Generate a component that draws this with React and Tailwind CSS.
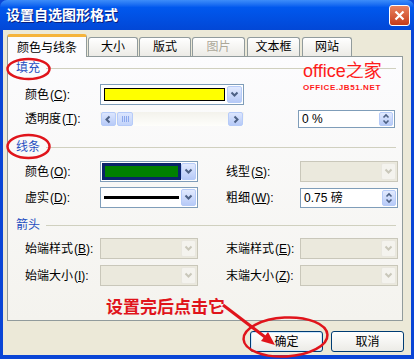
import clsx from 'clsx'

const Chevron = ({ dir = 'down', color = '#4D6185' }) => {
  const d = {
    down: 'M1.5 2.5 L4.5 5.5 L7.5 2.5',
    up: 'M1.5 5.5 L4.5 2.5 L7.5 5.5',
    left: 'M5.5 1.5 L2.5 4.5 L5.5 7.5',
    right: 'M3.5 1.5 L6.5 4.5 L3.5 7.5',
  }[dir]
  return (
    <svg width="9" height="9" viewBox="0 0 9 9">
      <path d={d} fill="none" stroke={color} strokeWidth="2" />
    </svg>
  )
}

const DropBtn = ({ disabled }) => (
  <div
    className={clsx(
      'flex w-[15px] shrink-0 items-center justify-center rounded-[2px] border',
      disabled ? 'border-[#E9E7DF] bg-[#F4F3EE]' : 'border-[#B6CBF8] bg-linear-to-b from-[#E2EAFE] to-[#B7CAF7]'
    )}
  >
    <Chevron color={disabled ? '#C9C7BA' : '#4D6185'} />
  </div>
)

const Combo = ({ className, disabled, children }) => (
  <div
    className={clsx(
      'flex h-[21px] shrink-0 border p-[1px]',
      disabled ? 'border-[#C9C7BA] bg-[#EBE9DD]' : 'border-[#7F9DB9] bg-white',
      className
    )}
  >
    <div className="min-w-0 flex-1">{children}</div>
    <DropBtn disabled={disabled} />
  </div>
)

const Spin = ({ className, value }) => (
  <div className={clsx('flex shrink-0 border border-[#7F9DB9] bg-white p-[1px]', className)}>
    <div className="flex flex-1 items-center pl-[2px] text-[12px] text-black">{value}</div>
    <div className="flex w-[14px] flex-col items-center justify-center rounded-[2px] border border-[#B6CBF8] bg-linear-to-b from-[#E2EAFE] to-[#B7CAF7]">
      <svg width="8" height="12" viewBox="0 0 8 12">
        <path d="M1.5 4.5 L4 2 L6.5 4.5 M1.5 7.5 L4 10 L6.5 7.5" fill="none" stroke="#4D6185" strokeWidth="1.6" />
      </svg>
    </div>
  </div>
)

const Label = ({ text, hotkey, className }) => (
  <span className={clsx('shrink-0 text-[12px] text-black', className)}>
    {text}
    <span className="ml-[1px]">
      (<u>{hotkey}</u>):
    </span>
  </span>
)

const Heading = ({ children, className }) => (
  <div className={clsx('flex h-[16px] items-center', className)}>
    <span className="text-[12px] text-[#1F4FC1]">{children}</span>
    <div className="ml-[6px] mr-[6px] h-px flex-1 bg-[#D0D0BF]" />
  </div>
)

const Tab = ({ active, disabled, className, children }) => (
  <div
    className={clsx(
      'flex items-center justify-center rounded-t-[3px] border-x border-t text-[12px]',
      active
        ? 'relative z-10 -mb-px h-[23px] border-x-[#919B9C] border-t-[3px] border-t-[#F5B43C] bg-[#FCFCFE] pt-[1px] text-black'
        : 'h-[19px] border-[#919B9C] bg-linear-to-b from-white to-[#ECEBE6]',
      disabled ? 'text-[#ACA899]' : 'text-black',
      className
    )}
  >
    {children}
  </div>
)

const XpButton = ({ children, def }) => (
  <div
    className={clsx(
      'flex h-[21px] w-[73px] items-center justify-center rounded-[3px] border border-[#003C74] bg-linear-to-b from-white to-[#ECEBE6] text-[12px] text-black',
      def && 'shadow-[inset_0_0_0_1px_#CEE7FF]'
    )}
  >
    {children}
  </div>
)

export default function App() {
  return (
    <div className="relative flex h-[359px] w-[414px] flex-col overflow-hidden bg-[#0A45D6] font-['Liberation_Sans','Noto_Sans_CJK_SC',sans-serif]">
      {/* title bar */}
      <div className="flex h-[30px] shrink-0 items-center rounded-t-[7px] bg-linear-to-b from-[#3D8DF9] via-[#0058EE] via-25% to-[#0247D6] pl-[6px]">
        <span className="text-[14px] font-bold text-white [text-shadow:1px_1px_0_#0A1F80]">设置自选图形格式</span>
        <div className="ml-auto mr-[4px] flex h-[21px] w-[21px] items-center justify-center rounded-[3px] border border-white bg-linear-to-b from-[#E9815E] to-[#C53A16]">
          <svg width="11" height="11" viewBox="0 0 11 11">
            <path d="M1.5 1.5 L9.5 9.5 M9.5 1.5 L1.5 9.5" stroke="white" strokeWidth="2.2" />
          </svg>
        </div>
      </div>

      {/* body */}
      <div className="mx-[3px] mb-[4px] flex flex-1 flex-col bg-[#ECE9D8] pl-[4px] pt-[4px]">
        <div className="flex h-[22px] items-end">
          <Tab active className="w-[80px]">颜色与线条</Tab>
          <Tab className="ml-px w-[50px]">大小</Tab>
          <Tab className="ml-px w-[52px]">版式</Tab>
          <Tab disabled className="ml-px w-[53px]">图片</Tab>
          <Tab className="ml-[2px] w-[53px]">文本框</Tab>
          <Tab className="ml-[2px] w-[50px]">网站</Tab>
        </div>

        <div className="h-[265px] w-[396px] border border-[#919B9C] bg-linear-to-b from-[#FCFCFE] to-[#F4F3EE] pl-[8px] pt-[3px]">
          <Heading>填充</Heading>

          <div className="mt-[8px] flex h-[21px] items-center pl-[9px]">
            <Label text="颜色" hotkey="C" className="w-[75px]" />
            <Combo className="w-[144px]">
              <div className="m-[2px] h-[13px] border border-black bg-[#FFFF00]" />
            </Combo>
          </div>

          <div className="mt-[5px] flex h-[18px] items-center pl-[9px]">
            <Label text="透明度" hotkey="T" className="w-[75px]" />
            <div className="flex h-[14px] w-[144px] shrink-0 gap-px bg-linear-to-b from-[#F3F2EC] to-[#FEFEFB] px-px">
              <div className="flex w-[15px] items-center justify-center rounded-[2px] border border-[#B6CBF8] bg-linear-to-b from-[#DCE6FE] to-[#B7CAF7]">
                <Chevron dir="left" />
              </div>
              <div className="flex w-[16px] items-center justify-center rounded-[2px] border border-[#B6CBF8] bg-linear-to-b from-[#DCE6FE] to-[#C3D4FA]">
                <svg width="7" height="6" viewBox="0 0 7 6">
                  <path d="M0.5 0 V6 M2.5 0 V6 M4.5 0 V6 M6.5 0 V6" stroke="#8CA8EC" strokeWidth="1" />
                </svg>
              </div>
              <div className="flex-1" />
              <div className="flex w-[15px] items-center justify-center rounded-[2px] border border-[#B6CBF8] bg-linear-to-b from-[#DCE6FE] to-[#B7CAF7]">
                <Chevron dir="right" />
              </div>
            </div>
            <Spin className="ml-[54px] h-[18px] w-[97px]" value="0 %" />
          </div>

          <Heading className="mt-[11px]">线条</Heading>

          <div className="mt-[6px] flex h-[21px] items-center pl-[9px]">
            <Label text="颜色" hotkey="O" className="w-[75px]" />
            <Combo className="w-[98px]">
              <div className="h-full bg-[#0A246A] p-[2px]">
                <div className="h-full border border-[#0A246A] bg-[#008000]" />
              </div>
            </Combo>
            <Label text="线型" hotkey="S" className="ml-[28px] w-[74px]" />
            <Combo disabled className="w-[98px]" />
          </div>

          <div className="mt-[5px] flex h-[21px] items-center pl-[9px]">
            <Label text="虚实" hotkey="D" className="w-[75px]" />
            <Combo className="w-[98px]">
              <div className="flex h-full items-center pl-[2px] pr-[2px]">
                <div className="h-[3px] w-full bg-black" />
              </div>
            </Combo>
            <Label text="粗细" hotkey="W" className="ml-[28px] w-[74px]" />
            <Spin className="h-[20px] w-[98px]" value="0.75 磅" />
          </div>

          <Heading className="mt-[9px]">箭头</Heading>

          <div className="mt-[5px] flex h-[21px] items-center pl-[9px]">
            <Label text="始端样式" hotkey="B" className="w-[75px]" />
            <Combo disabled className="w-[98px]" />
            <Label text="末端样式" hotkey="E" className="ml-[28px] w-[74px]" />
            <Combo disabled className="w-[98px]" />
          </div>

          <div className="mt-[6px] flex h-[21px] items-center pl-[9px]">
            <Label text="始端大小" hotkey="I" className="w-[75px]" />
            <Combo disabled className="w-[98px]" />
            <Label text="末端大小" hotkey="Z" className="ml-[28px] w-[74px]" />
            <Combo disabled className="w-[98px]" />
          </div>

          <div className="mt-[11px] pl-[90px] text-[17px] font-bold leading-[21px] text-[#E0141B]">设置完后点击它</div>
        </div>

        <div className="mt-[10px] flex justify-end gap-[8px] pr-[7px]">
          <XpButton def>确定</XpButton>
          <XpButton>取消</XpButton>
        </div>
      </div>

      {/* watermark */}
      <div className="pointer-events-none absolute left-[303px] top-[60px] flex flex-col text-[#FF1A1A]">
        <span className="text-[18px] leading-[22px]">office之家</span>
        <span className="mt-[1px] text-[8px] font-bold leading-[9px] tracking-[0.6px]">OFFICE.JB51.NET</span>
      </div>

      {/* red annotations */}
      <svg className="pointer-events-none absolute left-0 top-0" width="414" height="359" viewBox="0 0 414 359">
        <g fill="none" stroke="#E0141B" strokeWidth="2.5">
          <ellipse cx="28.5" cy="69" rx="21" ry="10" />
          <ellipse cx="28.5" cy="146.5" rx="21" ry="11.5" />
          <ellipse cx="285.5" cy="337" rx="42" ry="19.5" transform="rotate(-3 285.5 337)" />
          <path d="M223 305 L265 337" strokeWidth="3" />
        </g>
        <polygon points="275,345 261,341 268,332" fill="#E0141B" />
      </svg>
    </div>
  )
}
